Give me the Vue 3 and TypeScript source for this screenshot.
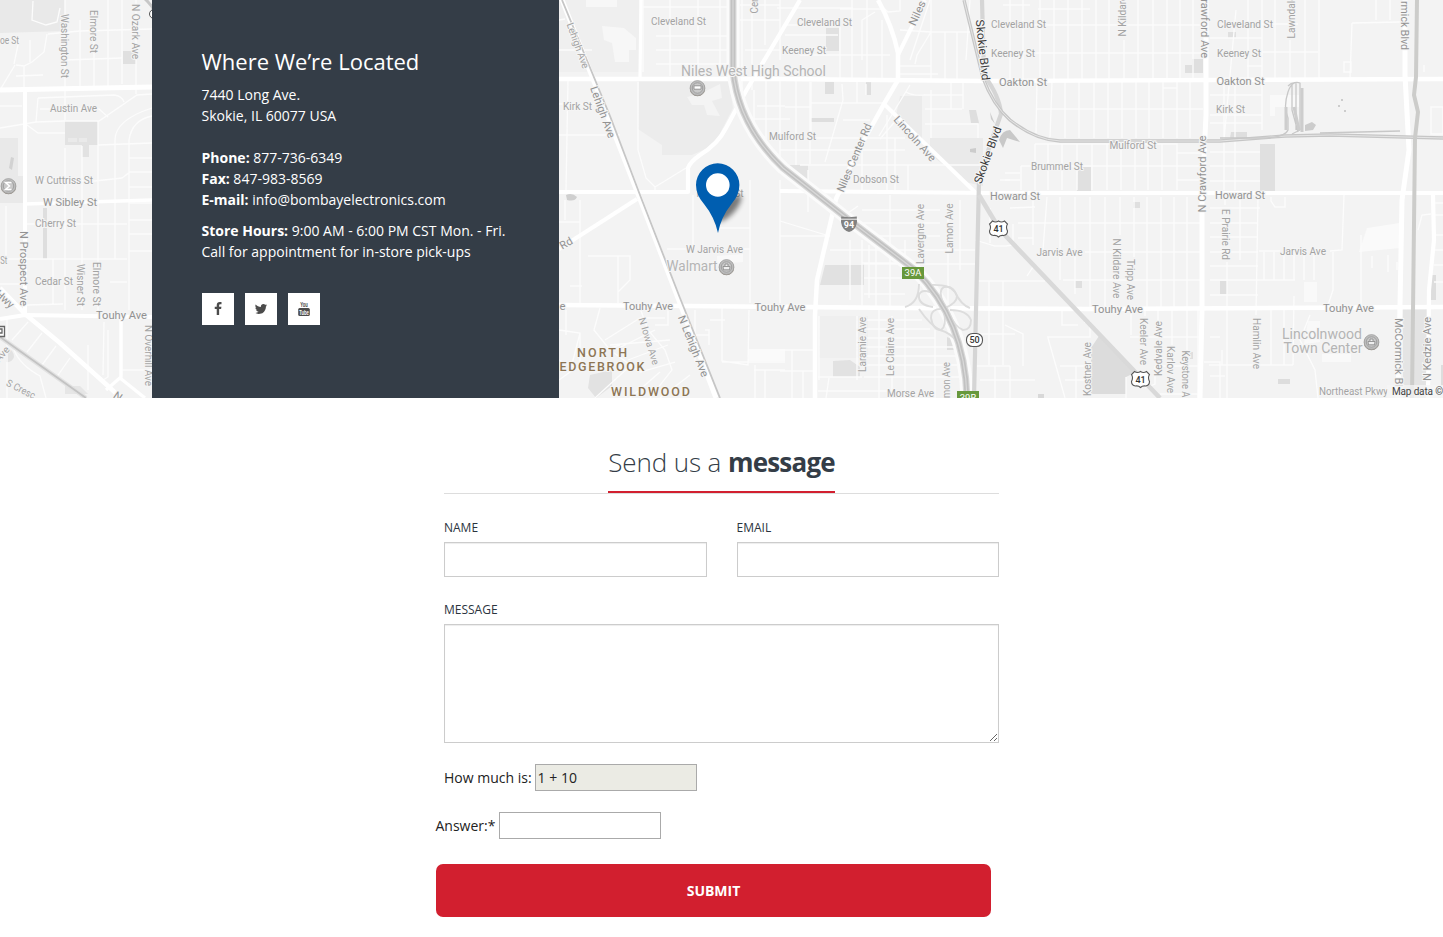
<script setup lang="ts">
type Tone = 'minor' | 'road' | 'poi' | 'dark' | 'area'

interface Label {
  text: string
  x: number
  y: number
  len: number
  rot: number
  tone: Tone
}

interface Stroke {
  d: string
  w: number
  c: string
}

interface Patch {
  d: string
  c: string
}

const L = (text: string, x: number, y: number, len: number, rot = 0, tone: Tone = 'minor'): Label => ({
  text, x, y, len, rot, tone,
})

const W = '#ffffff'
const M = '#fcfcfc'

const patches: Patch[] = [
  { d: 'M0 0H65V31L0 33Z', c: '#e9e9e9' },
  { d: 'M0 138H18V176H23V203H0Z', c: '#e9e9e9' },
  { d: 'M65 121H98V145H89V157H82V145H65Z', c: '#e2e2e2' },
  { d: 'M123 51H136V64H123Z', c: '#e0e0e0' },
  { d: 'M43 208H47V259H43Z', c: '#dedede' },
  { d: 'M11 157L14 158L12 170L9 168Z', c: '#d2d2d2' },
  { d: 'M6 347Q14 350 14 357Q12 363 6 362Z', c: '#e2e2e2' },
  { d: 'M65 386H80L88 394H65Z', c: '#e6e6e6' },
  { d: 'M68 138H77V142H68ZM79 138H87V142H79Z', c: '#eaeaea' },
  { d: 'M559 0H639V72H559Z', c: '#efefef' },
  { d: 'M586 0H617V7H586Z', c: '#f7f7f7' },
  { d: 'M602 26L624 28L636 38V50H629V62H615L612 43L604 40Z', c: '#f7f7f7' },
  { d: 'M639 81H729L733 108L714 145L692 155H662V145L638 129Z', c: '#ececec' },
  { d: 'M687 97L700 94L720 84L722 98L712 101L720 116L707 115L704 105L692 105Z', c: '#f4f4f4' },
  { d: 'M566 195Q572 192 577 197Q575 202 567 200Z', c: '#cfcfcf' },
  { d: 'M826 28H839V51H826Z', c: '#e1e1e1' },
  { d: 'M825 82H834V94H825Z', c: '#dfdfdf' },
  { d: 'M866 82H871V95H866Z', c: '#dedede' },
  { d: 'M811 118H834V122H811Z', c: '#dedede' },
  { d: 'M785 165H808V187L785 170Z', c: '#e2e2e2' },
  { d: 'M900 96H922V138H908L895 121Z', c: '#ebebeb' },
  { d: 'M930 138H983V186L965 182L930 154Z', c: '#eaeaea' },
  { d: 'M969 110L976 110L979 123L971 123Z', c: '#dedede' },
  { d: 'M990 112L995 124L991 119ZM970 149L976 148V153L970 152Z', c: '#cccccc' },
  { d: 'M999 140Q1002 130 1010 130L1020 142L1007 138L1003 148Z', c: '#c8c8c8' },
  { d: 'M1078 167H1091V193H1077Z', c: '#e0e0e0' },
  { d: 'M1192 59H1203V73H1185V65H1192Z', c: '#dfdfdf' },
  { d: 'M1228 32H1236V38H1228Z', c: '#e0e0e0' },
  { d: 'M1231 132H1247V138H1230Z', c: '#dedede' },
  { d: 'M1260 144H1275V193H1260Z', c: '#e0e0e0' },
  { d: 'M1305 125L1312 122L1316 125L1313 130L1305 131Z', c: '#cccccc' },
  { d: 'M1270 95H1299V107H1275V116H1270Z', c: '#f9f9f9' },
  { d: 'M1341 99H1343V101H1341ZM1338 105H1340V107H1338ZM1344 110H1346V112H1344Z', c: '#cccccc' },
  { d: 'M825 265H864V285H820Z', c: '#e1e1e1' },
  { d: 'M819 316H868V358H819Z', c: '#efefef' },
  { d: 'M833 361L850 360L860 367V377H833Z', c: '#e2e2e2' },
  { d: 'M947 337L954 340V350H947Z', c: '#dedede' },
  { d: 'M1133 202H1140V208H1133Z', c: '#dfdfdf' },
  { d: 'M1075 281H1082V288H1075Z', c: '#dfdfdf' },
  { d: 'M1099 336L1136 372L1126 377V394H1091V348Z', c: '#dcdcdc' },
  { d: 'M1038 394H1044V398H1038Z', c: '#d8d8d8' },
  { d: 'M1190 352H1193V359H1190Z', c: '#dedede' },
  { d: 'M1220 281H1227V294H1220Z', c: '#dedede' },
  { d: 'M1278 379H1290V384H1278Z', c: '#dddddd' },
  { d: 'M1403 308H1428V398H1403Z', c: '#e4e4e4' },
  { d: 'M1431 275H1436V300H1431ZM1441 365H1443V386H1441Z', c: '#dddddd' },
  { d: 'M1367 228L1400 223V248L1359 252Z', c: '#fafafa' },
  { d: 'M1304 282H1317V302H1304ZM1308 321H1320V342L1304 344ZM1322 354H1351V362H1322Z', c: '#f9f9f9' },
  { d: 'M717 256L743 254V262L717 264Z', c: '#f9f9f9' },
  { d: 'M748 349H785V361H748Z', c: '#fafafa' },
  { d: 'M590 375L612 370V386L596 398L588 388Z', c: '#e2e2e2' },
]

const minorRoads: string[] = [
  'M65 0V120M80 20V88M94 10V88M108 0V86M122 0V84M136 0V94',
  'M48 34L80 31L152 29M65 60L122 58M0 106H22M0 128L36 122M15 65L0 90M16 65L24 66L32 62L44 52L47 34M24 66V88M14 64L19 40M30 62L30 40M16 76L43 75',
  'M38 98L114 95Q122 96 124 102M38 98L36 122L65 121H99L137 95L152 94M27 125L38 133H65M40 109H99L108 117',
  'M35 181H95M95 181L122 178L130 172H152M115 259V140Q115 120 152 108M129 310V140Q132 120 152 116',
  'M98 121V310M82 146V310M98 145L152 143M65 148V259M27 224H127M8 259H127M53 259V305M65 259V310M129 158H152M129 187H152M129 203H152M129 220H152M129 234H152M129 251H152M27 305L63 304M110 282H127M6 206V259M0 284H22',
  'M104 322L103 375M108 330V377L103 380M12 340L28 322M27 352L42 333M42 365L56 346M56 378L70 358M88 345V390M122 370H152',
  'M33 1L32 20L46 25L57 22L60 8M7 320V398M14 350Q20 365 40 376L46 398',
  'M643 0V72M670 0V76M698 0V76M720 0V76M728 0V76M559 20L565 19M559 50H592M643 7H728M656 36H730M656 50H730M656 64H730M559 135H620M568 80L566 190',
  'M638 82V150L646 178L655 187L686 168M655 187V192M559 104H600',
  'M742 0V90M752 0V90M765 0V45M740 20H780M745 50H780M740 5H780M766 80V150M780 80V170M754 90V130M757 106H785M750 119H790M754 137H765M796 80V165M810 82V164M780 0V60',
  'M777 8H853M840 9H885M785 25H840M800 55H890M785 35H838M840 27V80M852 0V80M867 0V80M882 20V80M785 107H811M811 103H885M811 82V138M811 138H905M780 150H905M800 165H985M842 84L843 100L825 162M857 82V103M862 138V190M887 115V190M895 138V190M908 165V190M843 120H870M866 84V95',
  'M900 30L931 32H985M931 32L917 55L915 64M931 0V80M945 32V80M957 32V80M900 66H931M900 74H938M910 85L879 136M906 92Q912 96 925 95H963M925 109H962M963 82V109M951 82V109M925 124H978M978 124V138M898 118L880 139M970 0L966 60M931 90V138',
  'M877 2L888 12L900 11V0M875 12L862 20V60M1000 180H1010M1003 5H1030M1003 25H1200M1003 53H1205M1038 9H1090M1040 0V80M1054 0V80M1068 0V80M1082 0V80M1096 0V80M1109 0V80M1124 40V80M1138 0V80M1153 0V80M1167 0V80M1180 0V80M1193 0V80M1023 0V80M1010 0V80',
  'M1037 82L1036 133M1052 82L1050 137M1065 82V138M1079 82V138M1094 82V138M1108 82V138M1122 82V138M1136 82V138M1149 82V138M1163 82V138M1177 82V138M1190 82V138M1037 109H1203M1163 88H1177',
  'M1035 144H1177V190M1035 144V190M1048 144V190M1062 144V190M1077 144V190M1092 144V190M1107 144V190M1121 144V190M1135 144V190M1148 144V190M1162 144V190M1021 166H1205M1177 153H1203M1177 180H1203M1005 173H1020M1005 180H1020M1021 166V190',
  'M1210 95H1262M1210 115H1262M1210 123H1262M1210 152H1260M1210 166H1260M1210 181H1260M1210 38H1262M1262 0V130M1248 0V78M1236 10L1224 140M1275 0V80M1290 40V80M1305 0V80M1319 0V80M1262 24H1298M1262 52H1318M1247 66H1262M1224 82V190M1235 190V82',
  'M1376 0V20M1390 0V20M1352 23L1400 22M1352 23L1350 78M1344 62H1351V72H1344ZM1424 65V72M1431 107H1443V134H1431Z',
  'M559 222H580M565 220V200M580 200V303M588 256H630V280L618 292V300M618 256V303M570 286H582M559 330L580 333V370M566 310V335M559 360L580 370M580 333L570 372L559 380M600 308L594 330L610 350L640 372M640 308L648 330L665 350L672 370L650 398M610 345L670 340M605 340L640 318M615 350L655 330M628 360L668 345M640 372L675 362M585 355L620 345M595 398L630 366',
  'M630 398L660 372M660 398L690 375M695 310V362M710 320H725M705 330H709V345M694 335H709M722 308V361L748 365L749 310M722 362H785M693 195V250M750 180V303M718 228H750M667 249H686M738 249H750M780 180V303M655 325H668V308M755 365V398M765 370V398M754 370H785M640 318H665',
  'M808 170V212M780 221L826 235M780 236H830M829 209L845 215L858 206M862 210H940M860 223H940M870 236H940M830 250H975M864 264H975M850 240V300M862 240V305M869 245V298M890 195V310M876 240V310M862 263H900M905 265V240M919 264L920 300M864 278H905M864 294H905M948 210V310M960 200V270M905 310V398M879 310V398M892 316V398M935 330V398',
  'M864 320H922M864 329H930M864 338H935M864 347H955M864 356H957M864 365H960M864 377H960M818 377H862M818 391H900M780 350H813M780 371H813M803 371V398M792 350V398M819 316V380M857 316V380M829 378L826 398',
  'M990 208V243M975 240L995 246H1008M1013 224V245L1006 246M975 281L1045 281M989 281V365M1003 281V365M975 366H1010M995 366V398M1010 366V398M980 380H1035M1005 325L1023 334V366M975 334H1015M1047 337H1090V322L1084 322M1048 338L1065 398M1062 310V325H1078M1060 366H1090M1065 380H1090M1076 366V398',
  'M1033 197V245M1047 197L1043 250M1060 197V280M1075 197V294M1090 197V308M1105 197V308M1120 197V235M1134 197V257M1147 197V308M1161 197V308M1174 197V308M1187 197V308M1018 223H1202M1085 252H1202M1063 280H1202M1033 267L1027 276M1018 238H1033M1010 208L1035 207',
  'M1131 312V335M1145 310V316M1158 310V320M1172 310V345M1187 310V350M1130 337H1202M1155 366H1202M1155 366V384L1145 388M1126 377V398M1198 310V398M1210 337H1220M1204 362H1220V398M1210 376H1225M1160 394H1202',
  'M1210 208H1260M1210 223H1258M1210 237H1258M1210 252H1258M1210 266H1258M1210 280H1295M1210 295H1258M1225 197V205M1227 262V398M1258 197L1256 315M1240 195V260M1271 197V201L1275 207H1285V197M1344 195L1342 250L1330 251M1259 251H1280M1264 252V280M1274 252V280M1284 252V280M1294 252V280M1304 252V280M1314 252V280M1333 252V290L1328 305M1361 235V308M1271 310V365M1284 310V365M1209 365H1293M1294 296L1293 365M1310 315L1300 340L1315 370L1318 398M1222 350V365',
  'M1418 230L1422 215L1431 214M1434 250H1443M1434 265H1443M1434 282H1443M1434 235H1443M1434 215H1443M1434 203H1443M1388 255V272M1397 262V270M1372 256V268',
]

const roads: Stroke[] = [
  { d: 'M0 90L152 87', w: 5, c: W },
  { d: 'M25 88V315', w: 4, c: W },
  { d: 'M25 204L152 200', w: 3.6, c: W },
  { d: 'M0 319L25 315L152 317', w: 4, c: W },
  { d: 'M0 288L25 314L60 343L108 386L121 398', w: 4.5, c: W },
  { d: 'M121 320V377L106 390M120 378L145 398', w: 3.4, c: W },
  { d: 'M0 337L86 398', w: 4.5, c: '#e2e2e2' },
  { d: 'M0 337L86 398', w: 1.8, c: '#c3c3c3' },
  { d: 'M143 -3Q152 5 155 12', w: 3, c: '#c7c7c7' },
  { d: 'M559 79H780L984 81L1443 79', w: 4.4, c: W },
  { d: 'M641 0L640 79', w: 3.2, c: W },
  { d: 'M559 192H688V168Q690 162 700 155Q718 144 726 128L746 91L790 17L800 0', w: 4.2, c: W },
  { d: 'M780 191L990 193L1443 193', w: 4, c: W },
  { d: 'M559 249L637 199', w: 4, c: W },
  { d: 'M559 305L690 306L905 308L1090 309L1443 307', w: 4.6, c: W },
  { d: 'M878 0Q892 25 898 53V80L884 104L854 158L836 199L817 280L815 315V398', w: 4.5, c: W },
  { d: 'M925 0L898 55M884 104L918 137L975 192', w: 4, c: W },
  { d: 'M930 0L910 60', w: 1.4, c: M },
  { d: 'M1206 0V115L1202 200V310L1200 398', w: 5, c: W },
  { d: 'M1405 0V75L1409 150L1402 200L1400 305L1398 398', w: 5, c: W },
  { d: 'M1433 195L1434 240L1429 290L1428 398', w: 4.2, c: W },
  { d: 'M559 -8L640 199L678 298L716 398', w: 5, c: W },
  { d: 'M562 0L610 116L640 195L680 298L720 398', w: 1.8, c: '#c6c6c6' },
  { d: 'M733 0V70Q738 125 783 168L844 216L915 270Q965 320 967 398', w: 13, c: '#fbfbfb' },
  { d: 'M905 307Q919 303 919 284M933 307Q918 305 919 295Q921 289 930 292M930 285Q950 284 955 292Q961 305 970 308', w: 1.9, c: '#dddddd' },
  { d: 'M943 303Q938 290 944 287Q953 285 957 296Q957 303 945 308', w: 1.9, c: '#dddddd' },
  { d: 'M943 309Q931 308 931 318Q933 330 941 330Q947 326 944 312', w: 1.9, c: '#dddddd' },
  { d: 'M950 310Q967 310 971 320Q971 330 963 330Q955 327 949 313', w: 1.9, c: '#dddddd' },
  { d: 'M919 309Q930 325 940 330Q951 333 957 342', w: 1.9, c: '#dddddd' },
  { d: 'M733 0V70Q738 125 783 168L844 216L915 270Q965 320 967 398', w: 7, c: '#d9d9d9' },
  { d: 'M733 0V70Q738 125 783 168L844 216L915 270Q965 320 967 398', w: 4.6, c: '#c2c2c2' },
  { d: 'M733 0V70Q738 125 783 168L844 216L915 270Q965 320 967 398', w: 1.1, c: '#d9d9d9' },
  { d: 'M982 0L984 75Q1000 97 1001 114L990 145L979 180L974 398', w: 4.2, c: '#d5d5d5' },
  { d: 'M979 195L1000 230L1160 398', w: 4.6, c: '#d9d9d9' },
  { d: 'M964 0L983 78Q993 105 1010 120Q1035 140 1060 141H1220L1285 136L1330 135L1443 138', w: 3.3, c: '#c6c6c6' },
  { d: 'M964 0L983 78Q993 105 1010 120Q1035 140 1060 141H1220L1285 136L1330 135L1443 138', w: 1, c: '#e5e5e5' },
  { d: 'M1220 138H1260Q1285 138 1288 130V118Q1283 107 1288 92Q1292 80 1300 83V130L1292 134M1292 83V110L1298 132M1296 83V130M1288 86Q1292 82 1295 83M1320 133L1400 131', w: 1.3, c: '#c8c8c8' },
  { d: 'M1302 88V132M1286 107V130M1294 107L1299 130', w: 3, c: '#cdcdcd' },
  { d: 'M1417 0L1416 77L1414 95L1418 112L1415 138L1412 398', w: 4, c: '#ccccca' },
]

const labels: Label[] = [
  L('oe St', 9.5, 40, 19), L('Austin Ave', 73.5, 108, 47), L('W Cuttriss St', 64, 180, 58),
  L('W Sibley St', 70, 202, 54, 0, 'road'), L('Cherry St', 55.5, 223.5, 41), L('Cedar St', 54, 281.5, 38),
  L('St', 3.8, 260.5, 7), L('Washington St', 65, 46, 64, 90), L('Elmore St', 94, 31.5, 43, 90),
  L('N Ozark Ave', 136, 31.5, 55, 90), L('N Prospect Ave', 24, 268.5, 75, 90, 'road'),
  L('Wisner St', 81, 285, 42, 90), L('Elmore St', 97, 284, 44, 90), L('Touhy Ave', 121.5, 315, 51, 0, 'road'),
  L('N Overhill Ave', 149, 355.5, 61, 90), L('Hwy', 5, 299, 21, 42, 'road'), L('Ave', 2, 354, 17, -50),
  L('S Cresc', 21, 389, 31, 27), L('N', 118, 396, 8, 35, 'road'),
  L('Cleveland St', 678.5, 21.5, 55), L('Cen', 754, 5, 17, -90), L('Keeney St', 804, 50.5, 44),
  L('Niles West High School', 753.5, 71, 145, 0, 'poi'), L('Kirk St', 577.5, 106, 29),
  L('Lehigh Ave', 578, 45.5, 48, 70), L('Lehigh Ave', 603, 112, 54, 70, 'road'), L('Mulford St', 792.5, 136, 47),
  L('Cleveland St', 824.5, 22, 55), L('Niles', 917, 13, 26, -66, 'road'), L('Skokie Blvd', 983, 50, 61, 84, 'dark'),
  L('Skokie Blvd', 987.5, 155, 60, -70, 'dark'), L('Cleveland St', 1018.5, 24.5, 55), L('Keeney St', 1013, 53, 44),
  L('Oakton St', 1023, 82, 48, 0, 'road'), L('Niles Center Rd', 854, 157.5, 73, -67, 'road'),
  L('Lincoln Ave', 915, 138.5, 57, 48, 'road'), L('Dobson St', 876, 179.5, 46), L('Howard St', 1015, 196, 50, 0, 'road'),
  L('Mulford St', 1133, 145.5, 47), L('Brummel St', 1057, 166.5, 52), L('N Kildare', 1122, 16, 41, -90),
  L('Crawford Ave', 1204.5, 25, 66, 90, 'road'), L('N Crawford Ave', 1202, 174, 77, -90, 'road'),
  L('Cleveland St', 1245, 24, 56), L('Keeney St', 1239, 53, 44), L('Oakton St', 1240.5, 81, 48, 0, 'road'),
  L('Kirk St', 1230.5, 109.5, 29), L('Howard St', 1240, 195, 50, 0, 'road'), L('Lawndale', 1291, 17, 43, -90),
  L('rmick Blvd', 1405, 25.5, 49, 90, 'road'), L('Rd', 566, 243, 13, -30, 'road'), L('W Jarvis Ave', 714.5, 249, 57),
  L('Howard St', 720, 193, 47), L('Walmart', 692, 266, 51, 0, 'poi'), L('Touhy Ave', 648, 306, 50, 0, 'road'),
  L('Touhy Ave', 780, 307, 51, 0, 'road'), L('e', 562.5, 306, 6, 0, 'road'), L('N Iowa Ave', 649, 341, 49, 73),
  L('N Lehigh Ave', 693.5, 346, 65, 68, 'road'), L('NORTH', 602, 352.5, 50, 0, 'area'),
  L('EDGEBROOK', 602, 366, 85, 0, 'area'), L('WILDWOOD', 650.5, 391, 79, 0, 'area'),
  L('Lavergne Ave', 920, 234, 60, -90), L('Lamon Ave', 949, 228.5, 50, -90), L('Laramie Ave', 862, 344.5, 55, -90),
  L('Le Claire Ave', 890, 347, 58, -90), L('mon Ave', 946.5, 380, 36, -90), L('Morse Ave', 910.5, 393, 47),
  L('Jarvis Ave', 1059.5, 252, 46), L('N Kildare Ave', 1117, 268.5, 60, 90), L('Tripp Ave', 1131, 279.5, 41, 90),
  L('Touhy Ave', 1117.5, 309, 51, 0, 'road'), L('Keeler Ave', 1144, 341.5, 47, 90), L('Kedvale Ave', 1158, 348.5, 55, -90),
  L('Karlov Ave', 1171, 369.5, 47, 90), L('Keystone A', 1186, 374, 47, 90), L('Kostner Ave', 1087, 369, 54, -90),
  L('E Prairie Rd', 1225.5, 234.5, 51, 90), L('Hamlin Ave', 1256.5, 343.5, 51, 90), L('Jarvis Ave', 1303, 251.5, 46),
  L('Touhy Ave', 1348.5, 308.5, 51, 0, 'road'), L('Lincolnwood', 1322, 334, 80, 0, 'poi'),
  L('Town Center', 1323, 348, 79, 0, 'poi'), L('McCormick Bl', 1399, 352.5, 69, 90, 'road'),
  L('N Kedzie Ave', 1427, 349, 64, -90, 'road'), L('Northeast Pkwy', 1353.5, 391, 69),
]

const pins = [
  { x: 697.5, y: 88 },
  { x: 726.5, y: 267 },
  { x: 1371.5, y: 342 },
  { x: 8.5, y: 186 },
]
</script>

<template>
  <div class="page">
    <section class="location">
      <svg class="map" width="1443" height="398" viewBox="0 0 1443 398">
        <defs>
          <filter id="shade" x="-50%" y="-50%" width="200%" height="200%">
            <feGaussianBlur stdDeviation="2.4" />
          </filter>
        </defs>
        <rect width="1443" height="398" fill="#f3f3f3" />
        <path v-for="(p, i) in patches" :key="'p' + i" :d="p.d" :fill="p.c" />
        <path v-for="(d, i) in minorRoads" :key="'m' + i" :d="d" class="minor-road" />
        <path v-for="(r, i) in roads" :key="'r' + i" :d="r.d" :stroke="r.c" :stroke-width="r.w" class="road-line" />

        <text
          v-for="(l, i) in labels"
          :key="'l' + i"
          :class="['label', l.tone]"
          :transform="`translate(${l.x} ${l.y}) rotate(${l.rot})`"
          :textLength="l.len"
          :lengthAdjust="l.tone === 'area' ? 'spacing' : 'spacingAndGlyphs'"
          dy="0.36em"
        >{{ l.text }}</text>

        <g v-for="(p, i) in pins" :key="'pin' + i" :transform="`translate(${p.x} ${p.y})`">
          <circle cy="0.7" r="7.6" fill="#8d8579" />
          <circle r="7.4" fill="#bdbdbd" stroke="#a2a2a2" stroke-width="0.8" />
          <circle r="5.2" fill="#c9c9c9" stroke="#989898" stroke-width="0.8" />
          <path v-if="i === 0" d="M-3.5 -2.2H3.5V1.2H-3.5Z" fill="#fff" stroke="#858585" stroke-width="0.8" />
          <path v-else-if="i === 3" d="M3 -3.5H-3L1 0L-3 3.5H3" fill="none" stroke="#fff" stroke-width="1.5" />
          <path v-else d="M-3.5 -0.5H3.5L3 2.8H-3ZM-1.5 -1V-3H1.5V-1" fill="#eee" stroke="#858585" stroke-width="0.8" />
        </g>

        <g transform="translate(849 224)">
          <path d="M-7.8 -7.5L0 -6.7L7.8 -7.5L8 -2Q7 6 0 8Q-7 6 -8 -2Z" fill="#818181" />
          <path d="M-8 -4.8H8" stroke="#f3f3f3" stroke-width="1" />
          <text class="shield light" dy="3.8">94</text>
        </g>
        <g v-for="(p, i) in [[998.5, 229], [1140.5, 379.5]]" :key="'us' + i" :transform="`translate(${p[0]} ${p[1]})`">
          <path
            d="M-6 -8Q-3 -6 0 -8Q3 -6 6 -8L9 -5Q7 -2 9 2Q9 6 5 6.5Q2 6 0 8Q-2 6 -5 6.5Q-9 6 -9 2Q-7 -2 -9 -5Z"
            fill="#fff" stroke="#555" stroke-width="1.1"
          />
          <text class="shield" dy="3.3">41</text>
        </g>
        <g transform="translate(974.5 340)">
          <rect x="-8" y="-6.5" width="16" height="13" rx="6" fill="#fff" stroke="#555" stroke-width="1.1" />
          <text class="shield" dy="3.3">50</text>
        </g>
        <g transform="translate(913 273)">
          <rect x="-11" y="-6" width="22" height="12" fill="#67983c" />
          <text class="exit" dy="3.4">39A</text>
        </g>
        <g transform="translate(968 397)">
          <rect x="-11" y="-6" width="22" height="12" fill="#67983c" />
          <text class="exit" dy="3.8">39B</text>
        </g>
        <path d="M-2 326.5H4.5V336.5H-2M-2 329H2V333H-2" fill="#fff" stroke="#666" stroke-width="1.3" />
        <circle cx="154" cy="14" r="4.5" fill="#fff" stroke="#555" />

        <ellipse cx="729" cy="208" rx="17" ry="6.5" transform="rotate(-48 729 208)" fill="#000" opacity="0.5" filter="url(#shade)" />
        <path
          d="M718 233Q714.5 217 704 204Q696 195 696 185A21.7 21.7 0 0 1 739.4 185Q739.4 195 731.5 204Q721 217 718 233Z"
          fill="#005eb0"
        />
        <circle cx="717.8" cy="185" r="11.8" fill="#fff" />

        <rect x="1387" y="385" width="56" height="13" fill="#f5f5f5" opacity="0.75" />
        <text class="credit" x="1392" y="394.5" textLength="51">Map data ©</text>
      </svg>

      <div class="panel">
        <h2>Where We’re Located</h2>
        <p>7440 Long Ave.<br />Skokie, IL 60077 USA<br /><br />
          <b>Phone:</b> 877-736-6349<br />
          <b>Fax:</b> 847-983-8569<br />
          <b>E-mail:</b> info@bombayelectronics.com</p>
        <p><b>Store Hours:</b> 9:00 AM - 6:00 PM CST Mon. - Fri.<br />Call for appointment for in-store pick-ups</p>
        <div class="social">
          <a>
            <svg width="14" height="14" viewBox="0 0 1792 1792">
              <path d="M1343 12v264h-157q-86 0-116 36t-30 108v189h293l-39 296h-254v759h-306v-759h-255v-296h255v-218q0-186 104-288.500t277-102.500q147 0 228 12z" />
            </svg>
          </a>
          <a>
            <svg width="14" height="14" viewBox="0 0 1792 1792">
              <path d="M1684 408q-67 98-162 167 1 14 1 42 0 130-38 259.500t-115.500 248.500-184.500 210.500-258 146-323 54.500q-271 0-496-145 35 4 78 4 225 0 401-138-105-2-188-64.500t-114-159.500q33 5 61 5 43 0 85-11-112-23-185.500-111.500t-73.500-205.500v-4q68 38 146 41-66-44-105-115t-39-154q0-88 44-163 121 149 294.500 238.500t371.500 99.500q-8-38-8-74 0-134 94.500-228.500t228.500-94.500q140 0 236 102 109-21 205-78-37 115-142 178 93-10 186-50z" />
            </svg>
          </a>
          <a>
            <svg width="14" height="14" viewBox="0 0 14 14">
              <text class="yt" x="7" y="5.3" textLength="7.6" lengthAdjust="spacingAndGlyphs">You</text>
              <rect x="1.2" y="6.1" width="11.6" height="7.9" rx="1.5" />
              <text class="yt tube" x="7" y="12.5" textLength="9.6" lengthAdjust="spacingAndGlyphs">Tube</text>
            </svg>
          </a>
        </div>
      </div>
    </section>

    <form class="contact" @submit.prevent>
      <div class="heading"><h3>Send us a <b>message</b></h3></div>
      <div class="row">
        <label class="field">NAME<input type="text" /></label>
        <label class="field">EMAIL<input type="text" /></label>
      </div>
      <label class="field message">MESSAGE<textarea></textarea></label>
      <div class="check question"><span>How much is:</span><input type="text" value="1 + 10" disabled /></div>
      <div class="check answer"><span>Answer:*</span><input type="text" /></div>
      <button type="submit">SUBMIT</button>
    </form>
  </div>
</template>

<style>
body {
  margin: 0;
  background: #fff;
}
</style>

<style scoped>
.page {
  width: 1443px;
  height: 937px;
  overflow: hidden;
  background: #fff;
  font-family: 'Open Sans', sans-serif;
  color: #222;
}
.location {
  position: relative;
  height: 398px;
  display: flex;
  padding-left: 152px;
  box-sizing: border-box;
}
.map {
  position: absolute;
  left: 0;
  top: 0;
}
.minor-road {
  fill: none;
  stroke: #fcfcfc;
  stroke-width: 1.3;
}
.road-line {
  fill: none;
  stroke-linejoin: round;
}
.label {
  font-family: Roboto, sans-serif;
  text-anchor: middle;
  paint-order: stroke;
  stroke: #f5f5f5;
  stroke-width: 2px;
}
.minor {
  font-size: 10px;
  fill: #a3a3a3;
}
.road {
  font-size: 11px;
  fill: #929292;
}
.poi {
  font-size: 14px;
  fill: #b4b4b4;
}
.dark {
  font-size: 11.5px;
  fill: #3c3c3c;
}
.area {
  font-size: 12.5px;
  font-weight: 500;
  fill: #8d7554;
}
.shield {
  font: 500 9px Roboto, sans-serif;
  text-anchor: middle;
  fill: #333;
}
.shield.light {
  font-weight: 700;
  fill: #fff;
}
.exit {
  font: 9.5px Roboto, sans-serif;
  text-anchor: middle;
  fill: #fff;
}
.credit {
  font: 10px Roboto, sans-serif;
  fill: #444;
}
.panel {
  position: relative;
  width: 407px;
  height: 398px;
  box-sizing: border-box;
  padding: 46px 0 0 49.5px;
  background: #343d47;
  color: #fff;
  font-size: 14px;
  line-height: 21px;
  white-space: nowrap;
}
.panel h2 {
  margin: 0 0 8px;
  font-size: 22px;
  line-height: 30px;
  font-weight: 400;
}
.panel p {
  margin: 0 0 10px;
}
.social {
  display: flex;
  gap: 11px;
  margin-top: 31px;
  padding-left: 0.5px;
}
.social a {
  width: 32px;
  height: 32px;
  background: #fff;
  display: flex;
  align-items: center;
  justify-content: center;
  fill: #4b4b4b;
}
.social svg {
  margin-right: 1px;
}
.yt {
  font: 700 6.8px 'Liberation Sans', sans-serif;
  text-anchor: middle;
}
.tube {
  fill: #fff;
  font-size: 6.5px;
}
.contact {
  width: 555px;
  margin-left: 444px;
}
.heading {
  display: flex;
  justify-content: center;
  height: 95px;
  border-bottom: 1px solid #ddd;
}
.heading h3 {
  margin: 0;
  padding-top: 46px;
  height: 47px;
  line-height: 36px;
  font-size: 26px;
  font-weight: 300;
  letter-spacing: -0.1px;
  color: #343d47;
  border-bottom: 2px solid #d21f2f;
}
.heading b {
  font-weight: 700;
  letter-spacing: -0.8px;
}
.row {
  display: flex;
  gap: 30px;
  margin-top: 24px;
}
.field {
  flex: 1;
  display: flex;
  flex-direction: column;
  gap: 5px;
  font-size: 12px;
  line-height: 19px;
  color: #2b343e;
}
.field input,
.field textarea {
  box-sizing: border-box;
  width: 100%;
  height: 35px;
  margin: 0;
  border: 1px solid #ccc;
  border-radius: 0;
  background: #fff;
  box-shadow: inset 0 1px 1px rgba(0, 0, 0, 0.075);
  outline: none;
}
.field textarea {
  height: 119px;
}
.message {
  margin-top: 23px;
}
.check {
  display: flex;
  align-items: center;
  gap: 4px;
  height: 27px;
  font-size: 14px;
}
.check input {
  box-sizing: border-box;
  width: 162px;
  height: 27px;
  margin: 0;
  padding: 1px 2px;
  border: 1px solid #aaa;
  border-radius: 0;
  font: 14px 'Open Sans', sans-serif;
  color: #222;
}
.check input:disabled {
  background: #ebebe4;
}
.question {
  margin-top: 21px;
  gap: 3px;
}
.answer {
  margin: 21px 0 0 -8.5px;
}
button {
  display: block;
  width: 555px;
  height: 53px;
  margin: 25px 0 0 -8px;
  padding: 0;
  border: 0;
  border-radius: 7px;
  background: #d21f2f;
  color: #fff;
  font: 700 14px 'Open Sans', sans-serif;
}
</style>
